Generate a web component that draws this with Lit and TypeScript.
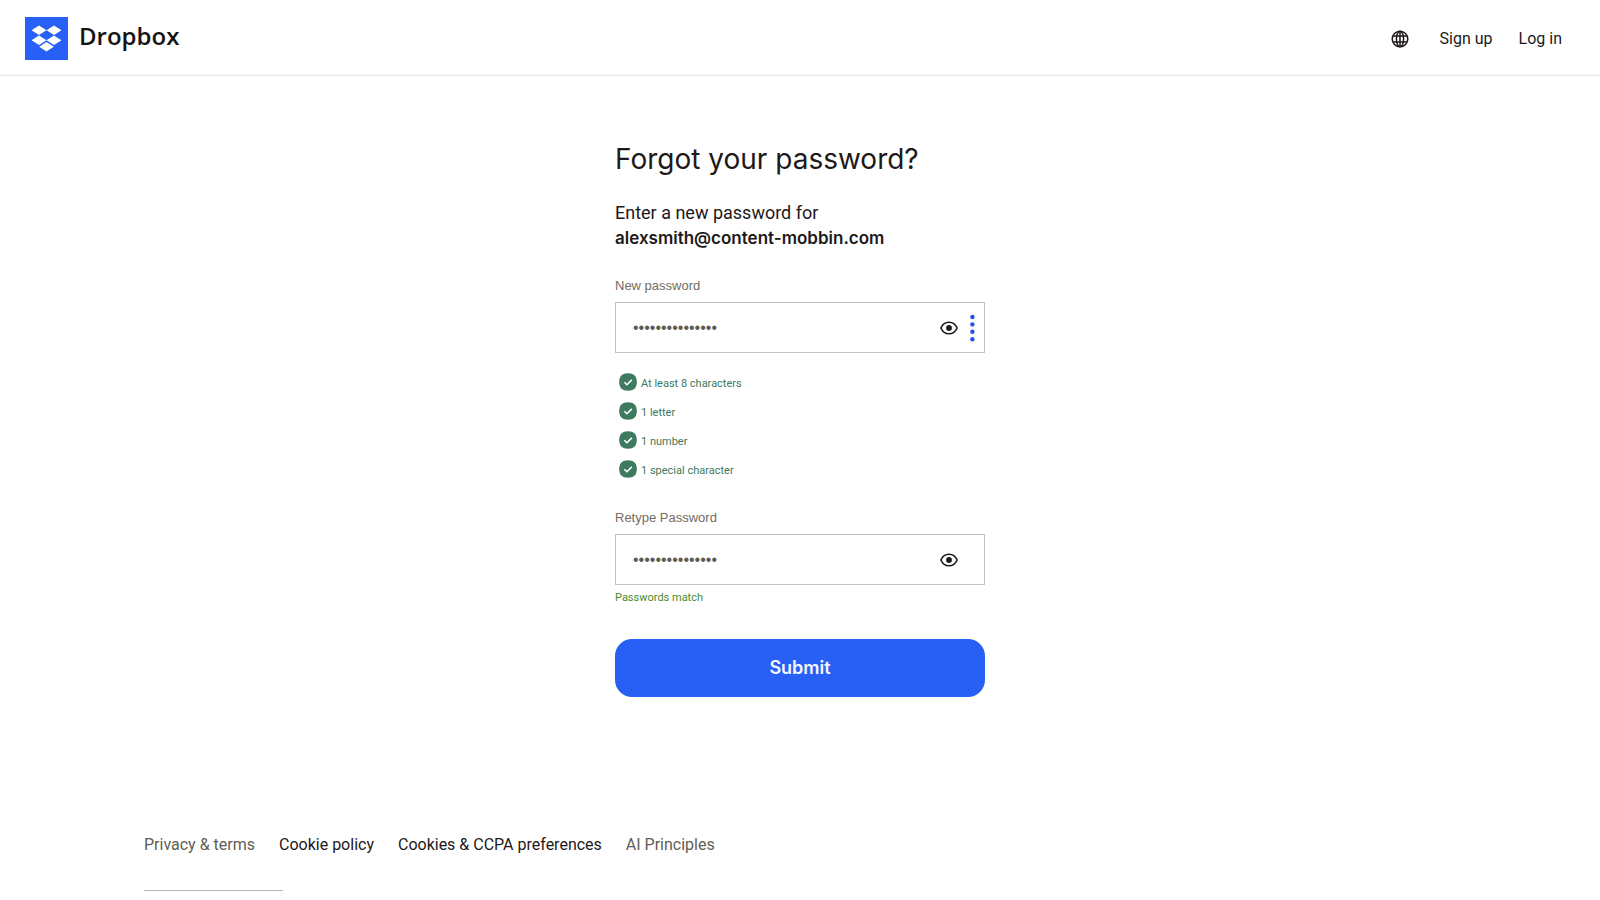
import { LitElement, html, css, svg } from "lit";
import { customElement, property, state } from "lit/decorators.js";

const checkIcon = svg`<svg class="check" viewBox="0 0 18 18" aria-hidden="true">
  <path fill="#3d7a5e" d="M9 .2C12 .2 14 .9 15.600 2.400 17.100 4 17.800 6 17.800 9S17.100 14 15.600 15.600C14 17.100 12 17.800 9 17.800S4 17.100 2.400 15.600C.9 14 .2 12 .2 9S.9 4 2.400 2.400C4 .9 6 .2 9 .2z"/>
  <path fill="none" stroke="#fff" stroke-width="1.600" d="M5.400 9.200l2.500 2.500 4.900-4.800"/>
</svg>`;

@customElement("password-field")
export class PasswordField extends LitElement {
  @property() label = "";
  @property() value = "";
  @property({ type: Boolean }) manager = false;
  @state() private revealed = false;

  static styles = css`
    :host { display: block; }
    .label {
      display: block;
      font: 13px/20px "Liberation Sans", Arial, sans-serif;
      color: #736c64;
      margin-bottom: 6px;
    }
    .box {
      display: flex;
      align-items: center;
      box-sizing: border-box;
      height: 51px;
      border: 1px solid #c6c3be;
      background: #fff;
      padding-left: 17px;
      padding-right: 8px;
    }
    .box:focus-within { border-color: #1e1919; }
    .input {
      flex: 1;
      min-width: 0;
      border: 0;
      outline: 0;
      padding: 0;
      background: none;
      color: #5f5b50;
      font: 16px/24px "Liberation Sans", Arial, sans-serif;
    }
    .icon {
      display: flex;
      border: 0;
      padding: 0;
      background: none;
      cursor: pointer;
    }
    .eye { width: 18px; height: 18px; }
    .side {
      width: 8px;
      display: flex;
      margin-left: 10px;
    }
    .dots { width: 8px; height: 28px; }
  `;

  render() {
    return html`
      <label class="label" for="pw">${this.label}</label>
      <div class="box">
        <input id="pw" class="input" type=${this.revealed ? "text" : "password"} .value=${this.value}
          autocomplete="new-password" />
        <button class="icon" type="button" aria-label="Show password"
          @click=${() => (this.revealed = !this.revealed)}>
          <svg class="eye" viewBox="0 0 18 18">
            <path fill="none" stroke="#1e1919" stroke-width="1.600"
              d="M.9 9C2.600 5.100 5.400 3.200 9 3.200S15.400 5.100 17.100 9C15.400 12.900 12.600 14.800 9 14.800S2.600 12.900.9 9z"/>
            <circle cx="9" cy="9" r="2.900" fill="#1e1919"/>
          </svg>
        </button>
        <div class="side">
          ${this.manager
            ? html`<button class="icon" type="button" aria-label="Password manager">
                <svg class="dots" viewBox="0 0 8 28" fill="#1d52ee">
                  ${[3, 10.4, 17.800, 25.200].map((y) => svg`<circle cx="4.400" cy=${y} r="2.200"/>`)}
                </svg>
              </button>`
            : ""}
        </div>
      </div>
    `;
  }
}

@customElement("app-root")
export class AppRoot extends LitElement {
  private rules = ["At least 8 characters", "1 letter", "1 number", "1 special character"];

  static styles = css`
    :host {
      display: flex;
      flex-direction: column;
      background: #fff;
      color: #1e1919;
      font-family: Roboto, "Liberation Sans", sans-serif;
    }
    a { color: inherit; text-decoration: none; }
    .header {
      display: flex;
      align-items: center;
      justify-content: space-between;
      height: 73px;
      padding: 2px 38px 0 25px;
      border-bottom: 1px solid #e9e6e2;
    }
    .brand {
      display: flex;
      align-items: center;
      gap: 11px;
    }
    .logo { width: 43px; height: 43px; }
    .name {
      padding-bottom: 6px;
      font: 600 24px/32px "Open Sans", "Noto Sans", sans-serif;
      color: #161313;
    }
    .nav {
      display: flex;
      align-items: center;
      gap: 26px;
      font-size: 16px;
      line-height: 24px;
    }
    .globe-button {
      display: flex;
      border: 0;
      padding: 0;
      margin-right: 5px;
      background: none;
      cursor: pointer;
    }
    .globe { width: 18px; height: 18px; }
    .main {
      box-sizing: border-box;
      width: 100%;
      max-width: 370px;
      margin: 0 auto;
      padding-top: 64px;
    }
    .title {
      margin: 0;
      font: 400 28px/38px Inter, sans-serif;
      white-space: nowrap;
    }
    .intro {
      margin: 22px 0 25px;
      font-size: 18px;
      line-height: 25px;
    }
    .intro b {
      display: block;
      font: 600 17px/26px Inter, sans-serif;
    }
    .rules {
      list-style: none;
      margin: 14px 0 25px;
      padding: 0 0 0 4px;
    }
    .rule {
      display: flex;
      align-items: center;
      gap: 4px;
      height: 29px;
      font-size: 11px;
      line-height: 16px;
      color: #3d7a5e;
    }
    .rule span { padding-top: 4px; }
    .check { width: 18px; height: 18px; }
    .match {
      margin: 5px 0 0;
      font-size: 11px;
      line-height: 16px;
      color: #4a8a2c;
    }
    .submit {
      display: block;
      width: 100%;
      height: 58px;
      margin-top: 33px;
      border: 0;
      border-radius: 17px;
      background: #2860f5;
      color: #f4f7ff;
      font: 600 18px/24px Inter, sans-serif;
      cursor: pointer;
    }
    .footer {
      padding: 136px 144px 9px;
      font-size: 16px;
      line-height: 24px;
    }
    .links { display: flex; flex-wrap: wrap; gap: 24px; }
    .muted { color: #625d55; }
    .rule-line {
      width: 139px;
      margin: 33px 0 0;
      border: 0;
      border-top: 1px solid #b9b5af;
    }
  `;

  render() {
    return html`
      <header class="header">
        <a class="brand" href="#">
          <svg class="logo" viewBox="0 0 43 43" aria-hidden="true">
            <path fill="#2860f5" d="M0 0h43v43H0z"/>
            <path fill="#fff" d="M14 8.400l7.500 4.800-7.500 4.800-7.500-4.800zM29 8.400l7.500 4.800-7.500 4.800-7.500-4.800zM14 18.400l7.500 4.800-7.500 4.800-7.500-4.800zM29 18.400l7.500 4.800-7.500 4.800-7.500-4.800zM21.500 24.900l7.300 4.800-7.300 4.800-7.300-4.800z"/>
          </svg>
          <span class="name">Dropbox</span>
        </a>
        <nav class="nav">
          <button class="globe-button" type="button" aria-label="Language">
            <svg class="globe" viewBox="0 0 18 18" fill="none" stroke="#1e1919" stroke-width="1.500">
              <circle cx="9" cy="9" r="7.800"/>
              <ellipse cx="9" cy="9" rx="3.600" ry="7.800"/>
              <path d="M2 6.100h14M2 11.900h14M9 1.200v15.600"/>
            </svg>
          </button>
          <a href="#">Sign up</a>
          <a href="#">Log in</a>
        </nav>
      </header>
      <main class="main">
        <h1 class="title">Forgot your password?</h1>
        <p class="intro">Enter a new password for <b>alexsmith@content-mobbin.com</b></p>
        <form @submit=${(e: Event) => e.preventDefault()}>
          <password-field label="New password" value="abcdefgh123456!" manager></password-field>
          <ul class="rules">
            ${this.rules.map((r) => html`<li class="rule">${checkIcon}<span>${r}</span></li>`)}
          </ul>
          <password-field label="Retype Password" value="abcdefgh123456!"></password-field>
          <p class="match">Passwords match</p>
          <button class="submit" type="submit">Submit</button>
        </form>
      </main>
      <footer class="footer">
        <nav class="links">
          <a class="muted" href="#">Privacy &amp; terms</a>
          <a href="#">Cookie policy</a>
          <a href="#">Cookies &amp; CCPA preferences</a>
          <a class="muted" href="#">AI Principles</a>
        </nav>
        <hr class="rule-line" />
      </footer>
    `;
  }
}
